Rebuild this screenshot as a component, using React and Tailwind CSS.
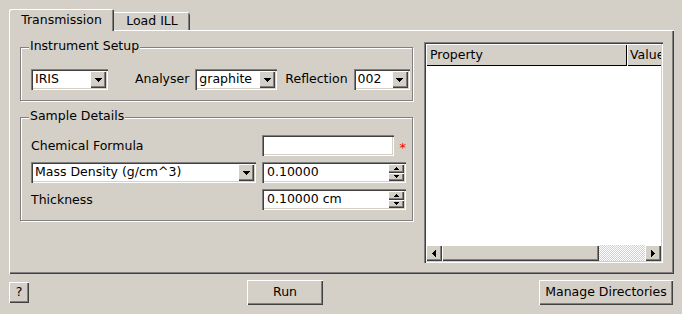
import React from "react";

const SUNKEN =
  "shadow-[inset_1px_1px_0_#808080,inset_2px_2px_0_#404040,inset_-1px_-1px_0_#ffffff,inset_-2px_-2px_0_#d4d0c8]";
const RAISED =
  "shadow-[inset_1px_1px_0_#ffffff,inset_-1px_-1px_0_#404040,inset_-2px_-2px_0_#808080]";

function Tri({ dir = "down", w = 7, h = 4 }) {
  const pts = {
    down: `0,0 ${w},0 ${w / 2},${h}`,
    up: `0,${h} ${w},${h} ${w / 2},0`,
    left: `${w},0 ${w},${h} 0,${h / 2}`,
    right: `0,0 0,${h} ${w},${h / 2}`,
  }[dir];
  return (
    <svg width={w} height={h} viewBox={`0 0 ${w} ${h}`} shapeRendering="crispEdges">
      <polygon points={pts} fill="#000" />
    </svg>
  );
}

function Combo({ value, width }) {
  return (
    <div className={`flex h-[21px] bg-white p-[2px] ${SUNKEN} ${width}`}>
      <span className="flex flex-1 items-center pl-[2px] leading-none">{value}</span>
      <span className={`flex w-[16px] items-center justify-center bg-[#d4d0c8] ${RAISED}`}>
        <Tri />
      </span>
    </div>
  );
}

function Spin({ value }) {
  return (
    <div className={`flex h-[21px] w-[144px] bg-white p-[2px] ${SUNKEN}`}>
      <span className="flex flex-1 items-center pl-[3px] leading-none">{value}</span>
      <div className="flex w-[16px] flex-col">
        <span className={`flex flex-1 items-center justify-center bg-[#d4d0c8] ${RAISED}`}>
          <Tri dir="up" w={5} h={3} />
        </span>
        <span className={`flex flex-1 items-center justify-center bg-[#d4d0c8] ${RAISED}`}>
          <Tri dir="down" w={5} h={3} />
        </span>
      </div>
    </div>
  );
}

function Group({ title, className, children }) {
  return (
    <div
      className={`relative w-[393px] border border-[#808080] shadow-[inset_1px_1px_0_#ffffff,1px_1px_0_#ffffff] ${className}`}
    >
      <span className="absolute -top-[8px] left-[8px] bg-[#d4d0c8] px-[1px] leading-none">{title}</span>
      {children}
    </div>
  );
}

export default function App() {
  return (
    <div className="h-[314px] w-[682px] overflow-hidden bg-[#d4d0c8] px-[9px] pt-[9px] font-['DejaVu_Sans',sans-serif] text-[12.5px] text-black">
      <div className="relative z-10 flex h-[21px] items-end">
        <div className="-mb-[1px] flex h-[22px] w-[105px] items-center justify-center rounded-t-[2px] bg-[#d4d0c8] pt-[1px] leading-none shadow-[inset_1px_1px_0_#ffffff,inset_-1px_0_0_#404040,inset_-2px_0_0_#808080]">
          Transmission
        </div>
        <div className="flex h-[18px] w-[76px] items-center justify-center rounded-tr-[2px] pt-[1px] leading-none shadow-[inset_0_1px_0_#ffffff,inset_-1px_0_0_#404040,inset_-2px_0_0_#808080]">
          Load ILL
        </div>
      </div>

      <div className={`flex h-[244px] w-[665px] gap-[10px] pl-[11px] pt-[12px] ${RAISED}`}>
        <div className="flex w-[394px] flex-col">
          <Group title="Instrument Setup" className="mt-[5px] h-[54px]">
            <div className="flex items-center pl-[10px] pt-[21px]">
              <Combo value="IRIS" width="w-[77px]" />
              <span className="ml-[27px] leading-none">Analyser</span>
              <Combo value="graphite" width="ml-[6px] w-[82px]" />
              <span className="ml-[8px] leading-none">Reflection</span>
              <Combo value="002" width="ml-[6px] w-[56px]" />
            </div>
          </Group>

          <Group title="Sample Details" className="mt-[16px] h-[104px]">
            <div className="grid grid-cols-[225px_144px] gap-x-[6px] gap-y-[6px] pl-[10px] pt-[17px]">
              <span className="flex h-[21px] items-center pt-[1px] leading-none">Chemical Formula</span>
              <div className="flex items-center">
                <div className={`h-[21px] w-[132px] bg-white ${SUNKEN}`} />
                <span className="ml-[6px] pt-[3px] text-[13px] leading-none text-[#ff0000]">*</span>
              </div>
              <Combo value="Mass Density (g/cm^3)" width="w-[225px]" />
              <Spin value="0.10000" />
              <span className="flex h-[21px] items-center pt-[1px] leading-none">Thickness</span>
              <Spin value="0.10000 cm" />
            </div>
          </Group>
        </div>

        <div className={`flex h-[221px] w-[239px] flex-col bg-white p-[2px] ${SUNKEN}`}>
          <div className="flex h-[22px] bg-[#d4d0c8]">
            <div className="flex w-[201px] items-center pl-[4px] leading-none shadow-[inset_1px_1px_0_#ffffff,inset_-1px_-1px_0_#000000]">
              Property
            </div>
            <div className="flex flex-1 items-center overflow-hidden whitespace-nowrap pl-[3px] leading-none shadow-[inset_1px_1px_0_#ffffff,inset_0_-1px_0_#000000]">
              Value
            </div>
          </div>
          <div className="flex-1" />
          <div className="flex h-[16px]">
            <span className={`flex w-[16px] items-center justify-center bg-[#d4d0c8] ${RAISED}`}>
              <Tri dir="left" w={4} h={7} />
            </span>
            <span className={`w-[157px] bg-[#d4d0c8] ${RAISED}`} />
            <span className="flex-1 bg-[image:repeating-conic-gradient(#d4d0c8_0_25%,#ffffff_0_50%)] bg-[length:2px_2px]" />
            <span className={`flex w-[16px] items-center justify-center bg-[#d4d0c8] ${RAISED}`}>
              <Tri dir="right" w={4} h={7} />
            </span>
          </div>
        </div>
      </div>

      <div className="mt-[6px] flex items-center">
        <button className={`flex h-[21px] w-[20px] items-center justify-center leading-none ${RAISED}`}>?</button>
        <button className={`ml-[218px] flex h-[25px] w-[76px] items-center justify-center leading-none ${RAISED}`}>
          Run
        </button>
        <button className={`ml-auto flex h-[25px] w-[134px] items-center justify-center leading-none ${RAISED}`}>
          Manage Directories
        </button>
      </div>
    </div>
  );
}
